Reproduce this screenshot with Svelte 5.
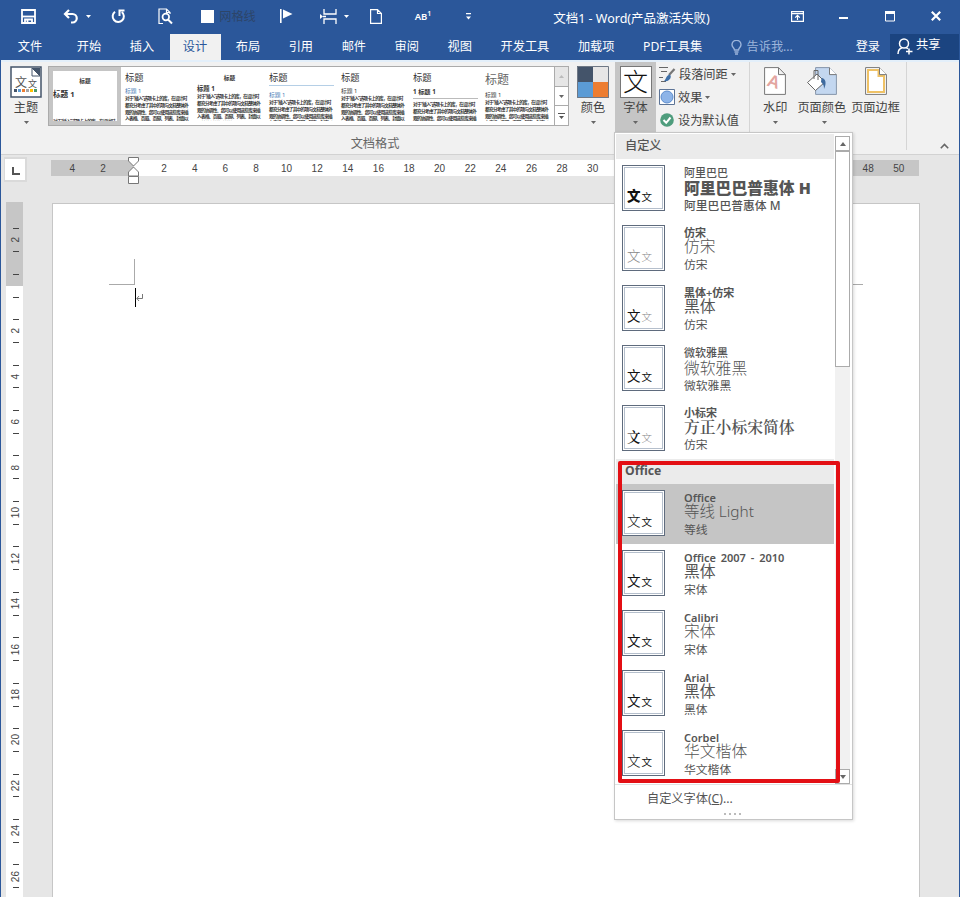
<script>
  const tabs = ['开始', '插入', '设计', '布局', '引用', '邮件', '审阅', '视图', '开发工具', '加载项', 'PDF工具集'];
  let activeTab = $state('设计');

  const sample =
    '对于“插入”选项卡上的库，在设计时都充分考虑了其中的项与文档整体外观的协调性。您可以使用这些库来插入表格、页眉、页脚、列表、封面以及其他文档构建基块。';

  const styles = [
    { kind: 'selected', heading: '标题 1' },
    { kind: 'blue', heading: '标题 1' },
    { kind: 'center', heading: '标题 1' },
    { kind: 'blue lined', heading: '标题 1' },
    { kind: 'plain', heading: '标题 1' },
    { kind: 'numbered', heading: '1 标题 1' },
    { kind: 'large', heading: '标题 1' }
  ];

  const customFonts = [
    { name: '阿里巴巴', head: '阿里巴巴普惠体 H', body: '阿里巴巴普惠体 M', kind: 'heavy low' },
    { name: '仿宋', head: '仿宋', body: '仿宋', kind: 'song faint' },
    { name: '黑体+仿宋', head: '黑体', body: '仿宋', kind: 'mixed' },
    { name: '微软雅黑', head: '微软雅黑', body: '微软雅黑', kind: 'low wide' },
    { name: '小标宋', head: '方正小标宋简体', body: '仿宋', kind: 'title-song' }
  ];

  const officeFonts = [
    { name: 'Office', head: '等线 Light', body: '等线', kind: 'thin' },
    { name: 'Office 2007 - 2010', head: '黑体', body: '宋体', kind: '' },
    { name: 'Calibri', head: '宋体', body: '宋体', kind: 'wide' },
    { name: 'Arial', head: '黑体', body: '黑体', kind: '' },
    { name: 'Corbel', head: '华文楷体', body: '华文楷体', kind: 'song' }
  ];
  let selectedFont = $state('Office');

  const hRuler = [4, 2, ''];
  for (let n = 2; n <= 50; n += 2) hRuler.push(n);

  const vRuler = [2, ''];
  for (let n = 2; n <= 26; n += 2) vRuler.push(n);
</script>

{#snippet caret()}
  <svg class="caret" width="5" height="3" viewBox="0 0 5 3"><path d="M0 0h5L2.5 3z" fill="currentColor" /></svg>
{/snippet}

{#snippet fontRow(font)}
  <button
    class="font-row {font.kind}"
    class:current={selectedFont === font.name}
    onclick={() => (selectedFont = font.name)}
  >
    <span class="thumb"><span class="thumb-in"><b>文</b><i>文</i></span></span>
    <span class="font-text">
      <span class="font-name">{font.name}</span>
      <span class="font-head">{font.head}</span>
      <span class="font-body">{font.body}</span>
    </span>
  </button>
{/snippet}

<div class="app">
  <header class="titlebar">
    <div>
      <svg width="15" height="15" viewBox="0 0 15 15" fill="none" stroke="#fff" stroke-width="1.8">
        <path d="M1 1h13v13H1z" /><path d="M1 7.500h13" /><path d="M4 14v-3.500h7V14" /><path d="M6.500 11v3" />
      </svg>
    </div>
    <div class="with-caret">
      <svg width="16" height="15" viewBox="0 0 16 15" fill="none" stroke="#fff" stroke-width="2.2">
        <path d="M6 1L2 5l4 4" /><path d="M2 5h7.500a4.200 4.200 0 0 1 0 8.500H8" />
      </svg>
      {@render caret()}
    </div>
    <div>
      <svg width="15" height="15" viewBox="0 0 15 15" fill="none" stroke="#fff" stroke-width="2">
        <path d="M4 2.800A5.600 5.600 0 1 0 10.800 3" /><path d="M13.500 1.500H8.500v5.500" />
      </svg>
    </div>
    <div>
      <svg width="15" height="17" viewBox="0 0 15 17" fill="none" stroke="#fff" stroke-width="1.2">
        <path d="M5 15.500H1V1h7.500L12 4.500V6M8.500 1v3.500H12" /><circle cx="7.800" cy="9" r="3.300" stroke-width="1.700" /><path d="M10 11.500l4 4" stroke-width="2" />
      </svg>
    </div>
    <div class="gridlines"><span class="box"></span><span>网格线</span></div>
    <div>
      <svg width="13" height="14" viewBox="0 0 13 14" fill="#fff"><path d="M0 0h1.600v14H0zM3 .5l9.500 4.500L3 9.500z" /></svg>
    </div>
    <div class="with-caret">
      <svg width="17" height="15" viewBox="0 0 17 15" fill="none" stroke="#fff" stroke-width="1.300">
        <path d="M4 0v5h12V0M4 15v-5h12v5M3 7.500h3" /><path d="M0 5l3 2.500L0 10z" fill="#fff" stroke="none" />
      </svg>
      {@render caret()}
    </div>
    <div>
      <svg width="12" height="15" viewBox="0 0 12 15" fill="none" stroke="#fff" stroke-width="1.200"><path d="M.6.6h6.900L11.400 4.500v9.900H.6zM7.500.6v3.900h3.900" /></svg>
    </div>
    <div class="ab">AB<sup>1</sup></div>
    <div>
      <svg width="5" height="7" viewBox="0 0 5 7" fill="#fff"><path d="M0 0h5v1.200H0zM0 3.500h5L2.500 6.500z" /></svg>
    </div>
    <div class="title">文档1 - Word(产品激活失败)</div>
    <div>
      <svg width="13" height="11" viewBox="0 0 13 11" fill="none" stroke="#fff" stroke-width="1.200">
        <path d="M.6.6h11.800v9.800H.6zM.6 2.600h11.800M6.500 9V4.500M4.200 6.600l2.300-2.300 2.300 2.300" />
      </svg>
    </div>
    <div><svg width="9" height="5" viewBox="0 0 9 5"><path d="M0 3h9v2H0z" fill="#fff" /></svg></div>
    <div>
      <svg width="10" height="11" viewBox="0 0 10 11"><path d="M.5.5h9v9.500h-9z" fill="none" stroke="#fff" /><path d="M0 0h10v3H0z" fill="#fff" /></svg>
    </div>
    <div>
      <svg width="10" height="10" viewBox="0 0 10 10"><path d="M.8.8l8.400 8.400M9.200.8L.8 9.200" stroke="#fff" stroke-width="2.200" /></svg>
    </div>
  </header>

  <nav class="tabs">
    <button class="tab file">文件</button>
    {#each tabs as tab}
      <button class="tab" class:active={tab === activeTab} onclick={() => (activeTab = tab)}>{tab}</button>
    {/each}
    <div class="tell">
      <svg width="11" height="15" viewBox="0 0 11 15" fill="none" stroke="#9db5db" stroke-width="1.400">
        <path d="M3.500 10C3.500 8 1 7.500 1 4.800a4.300 4.300 0 0 1 9 0C10 7.500 7.500 8 7.500 10zM3.500 12h4M4 14h3" />
      </svg>
      <span>告诉我...</span>
    </div>
    <button class="login">登录</button>
    <button class="share">
      <svg width="16" height="17" viewBox="0 0 16 17" fill="none" stroke="#fff" stroke-width="1.500">
        <circle cx="7" cy="5.500" r="4.500" /><path d="M1 16c0-3.500 1.500-5.500 4-6.300M9 9.700l2 1M12 10.500v6M9 13.500h6.500" />
      </svg>
      <span>共享</span>
    </button>
  </nav>

  <section class="ribbon">
    <button class="big theme">
      <svg width="32" height="32" viewBox="0 0 32 32">
        <path d="M1 1h30v30H1z" fill="#fff" stroke="#44546a" stroke-width="1.500" />
        <path d="M22 2v8h8z" fill="#fff" stroke="#44546a" /><path d="M22 2h8v8z" fill="#44546a" />
        <text x="5" y="21" font-size="12" fill="#555">文</text><text x="18" y="21" font-size="9" fill="#555">文</text>
        <path d="M4 23h3v3H4z" fill="#44546a" /><path d="M8 23h3v3H8z" fill="#5b9bd5" /><path d="M12 23h3v3h-3z" fill="#ed7d31" />
        <path d="M16 23h3v3h-3z" fill="#a5a5a5" /><path d="M20 23h3v3h-3z" fill="#ffc000" /><path d="M24 23h3v3h-3z" fill="#4a9a6b" />
      </svg>
      <span>主题</span>
      {@render caret()}
    </button>

    <div class="formats">
      <div class="gallery">
        {#each styles as style}
          <div class="style {style.kind}">
            <div class="style-title">标题</div>
            <div class="style-heading">{style.heading}</div>
            <div class="style-body">{sample}</div>
          </div>
        {/each}
        <div class="spinner">
          <span class="off"><svg class="caret" width="5" height="3"><path d="M0 3h5L2.500 0z" fill="currentColor" /></svg></span>
          <span>{@render caret()}</span>
          <span><svg width="7" height="6"><path d="M0 0h7v1H0zM1 3h5L3.500 6z" fill="#555" /></svg></span>
        </div>
      </div>
      <div class="group-label">文档格式</div>
    </div>

    <button class="big colors">
      <svg width="32" height="32" viewBox="0 0 32 32">
        <path d="M0 0h16v16H0z" fill="#44546a" /><path d="M16 0h16v16H16z" fill="#e7e6e6" />
        <path d="M0 16h16v16H0z" fill="#5b9bd5" /><path d="M16 16h16v16H16z" fill="#ed7d31" />
        <path d="M.5.5h31v31H.5z" fill="none" stroke="#6f7885" />
      </svg>
      <span>颜色</span>
      {@render caret()}
    </button>

    <button class="big fonts">
      <span class="font-icon">文</span>
      <span>字体</span>
      {@render caret()}
    </button>

    <div class="stack">
      <button>
        <svg width="17" height="17" viewBox="0 0 17 17" fill="none">
          <path d="M0 1.500h9M2 5.500h6M0 11.500h4M2 15.500h5" stroke="#666" /><path d="M15.500 3L10 9" stroke="#777" stroke-width="2.200" />
          <path d="M10.500 8.500c2 1 1.500 4-.5 5.500-1.500 1.200-3.500 1.500-5 1 2-1 1.500-5 5.500-6.500z" fill="#3e6fa8" />
        </svg>
        <span>段落间距</span>{@render caret()}
      </button>
      <button>
        <svg width="16" height="16" viewBox="0 0 16 16">
          <path d="M.5.5h15v15H.5z" fill="#fff" stroke="#5d7496" /><circle cx="8" cy="8" r="6" fill="#8db4e8" stroke="#5c8ccd" />
        </svg>
        <span>效果</span>{@render caret()}
      </button>
      <button>
        <svg width="16" height="16" viewBox="0 0 16 16">
          <circle cx="8" cy="8" r="6.800" fill="#4f9d7d" /><path d="M4.500 8l2.700 2.800 4.300-5.300" fill="none" stroke="#fff" stroke-width="2" />
        </svg>
        <span>设为默认值</span>
      </button>
    </div>

    <div class="page-group">
      <button class="big">
        <svg width="22" height="30" viewBox="0 0 22 30">
          <path d="M.6 1.600h13.900l6.900 7v19.800H.6zM14.500 1.600v7h6.900" fill="#fff" stroke="#777" />
          <text class="mark" x="4" y="22" transform="rotate(18 11 16)">A</text>
        </svg>
        <span>水印</span>
        {@render caret()}
      </button>
      <button class="big page-color">
        <svg width="32" height="30" viewBox="0 0 32 30">
          <path d="M9.600 1.600h13.900l6.900 7v19.800H9.600z" fill="#c3d7f0" stroke="#8796aa" /><path d="M23.500 1.600v7h6.900" fill="#fff" stroke="#777" />
          <path d="M1.500 16.500L11 8l8 8-9.500 8.500z" fill="#fff" stroke="#666" /><path d="M8 13V4.500h4V14" fill="none" stroke="#666" />
          <path d="M15.500 12c4 0 5.500 5 2.500 11 0-4-1-5-3-7z" fill="#3e6a9e" />
        </svg>
        <span>页面颜色</span>
        {@render caret()}
      </button>
      <button class="big">
        <svg width="22" height="30" viewBox="0 0 22 30">
          <path d="M.6 1.600h13.900l6.900 7v19.800H.6z" fill="#fff" stroke="#777" />
          <path d="M3 4h10.500v6H19v16H3z" fill="none" stroke="#efc266" stroke-width="2" /><path d="M14.500 1.600v7h6.900" fill="#fff" stroke="#777" />
        </svg>
        <span>页面边框</span>
      </button>
    </div>

    <svg class="collapse" width="9" height="6" viewBox="0 0 9 6"><path d="M.8 5.200L4.500 1.500l3.700 3.700" fill="none" stroke="#666" stroke-width="1.600" /></svg>
  </section>

  <main class="workspace">
    <div class="ruler-row">
      <div class="tab-stop"><svg width="8" height="8"><path d="M1 0v7h7" fill="none" stroke="#555" stroke-width="2" /></svg></div>
      <div class="h-ruler">
        {#each hRuler as n}<span>{n}</span>{/each}
        <svg class="indent" width="12" height="29" viewBox="0 0 12 29" fill="#fff" stroke="#777">
          <path d="M.5 1.500h10V5L5.500 10 .5 5zM5.500 11l5 5v4H.5v-4zM.5 20.500h10v7H.5z" />
        </svg>
      </div>
    </div>
    <div class="doc-row">
      <div class="v-ruler">
        {#each vRuler as n}
          <div class="v-cell"><hr /><span>{n}</span><hr /></div>
        {/each}
      </div>
      <div class="page">
        <div class="crops"><span class="crop-left"></span><span class="crop-right"></span></div>
        <div class="line">
          <span class="cursor"></span>
          <svg width="7" height="8" viewBox="0 0 7 8" fill="none" stroke="#777"><path d="M6.500 0v4.500H1M3 2L.8 4.500 3 7" /></svg>
        </div>
      </div>
    </div>
  </main>

  <div class="menu">
    <div class="menu-top">
      <div class="menu-list">
        <div class="menu-header">自定义</div>
        {#each customFonts as font}{@render fontRow(font)}{/each}
        <div class="menu-header office">Office</div>
        {#each officeFonts as font}{@render fontRow(font)}{/each}
      </div>
      <div class="scrollbar">
        <span class="arrow"><svg width="6" height="4"><path d="M0 4h6L3 0z" fill="#666" /></svg></span>
        <span class="track-thumb"></span>
        <span class="arrow down"><svg width="6" height="4"><path d="M0 0h6L3 4z" fill="#666" /></svg></span>
      </div>
    </div>
    <div class="menu-footer">自定义字体(<u>C</u>)...</div>
    <div class="grip"><i></i><i></i><i></i><i></i></div>
    <div class="highlight"></div>
  </div>
</div>

<style>
  :global(body) {
    margin: 0;
  }

  .app {
    position: relative;
    box-sizing: border-box;
    width: 960px;
    height: 897px;
    display: flex;
    flex-direction: column;
    overflow: hidden;
    border: solid #2b579a;
    border-width: 0 1px;
    background: #e6e6e6;
    font-family: 'Noto Sans', 'Noto Sans CJK SC', sans-serif;
    font-size: 12.2px;
    color: #444;
  }

  .app * {
    box-sizing: border-box;
  }

  svg {
    display: block;
    flex: none;
  }

  button {
    padding: 0;
    border: 0;
    background: none;
    color: inherit;
    font: inherit;
    white-space: nowrap;
  }

  /* title bar */
  .titlebar {
    display: grid;
    grid-template-columns: 54px 46px 34px 60px 67px 48px 50px 32px 62px 28px 292px 46px 46px 47px 46px;
    flex: none;
    height: 34px;
    background: #2b579a;
    color: #fff;
  }

  .titlebar > div {
    display: flex;
    align-items: center;
    justify-content: center;
    padding-bottom: 2px;
    white-space: nowrap;
  }

  .titlebar .with-caret {
    gap: 7px;
    padding-right: 2px;
  }

  .gridlines {
    gap: 5px;
    color: #2d4569;
  }

  .box {
    width: 13px;
    height: 13px;
    background: #fff;
  }

  .titlebar .ab {
    font-size: 9.5px;
    font-weight: 600;
  }

  sup {
    font-size: 7px;
    line-height: 1;
    margin-bottom: 6px;
  }

  .titlebar .title {
    padding: 1px 0 0 7px;
    font-size: 12.5px;
  }

  /* tabs */
  .tabs {
    display: flex;
    flex: none;
    height: 26px;
    background: #2b579a;
    color: #fff;
  }

  .tab {
    flex: none;
    padding: 0 14.3px 3px;
  }

  .file {
    width: 58px;
    margin-right: 3.5px;
  }

  .active {
    margin-left: 1.5px;
    padding-left: 12.8px;
    background: #f1f1f1;
    color: #2b579a;
  }

  .tell {
    display: flex;
    align-items: center;
    gap: 5px;
    width: 126px;
    padding-left: 14px;
    color: #9db5db;
  }

  .tell span {
    padding-bottom: 2px;
  }

  .login {
    margin-left: auto;
    padding: 0 10px 3px 0;
  }

  .share {
    display: flex;
    gap: 3px;
    width: 69px;
    padding: 4px 0 0 7px;
    background: #1b4480;
  }

  .share span {
    line-height: 14px;
  }

  /* ribbon */
  .ribbon {
    display: flex;
    align-items: flex-start;
    flex: none;
    height: 95px;
    border-top: 2px solid #e3effa;
    border-bottom: 1px solid #d2d2d2;
    background: #f1f1f1;
  }

  .big {
    display: flex;
    flex-direction: column;
    align-items: center;
    flex: none;
    height: 70px;
    padding-top: 4px;
    line-height: 19px;
  }

  .big > span:not(.font-icon) {
    height: 22px;
    margin-bottom: 1px;
  }

  .caret {
    color: #666;
  }

  .titlebar .caret {
    color: #fff;
  }

  .theme {
    width: 32px;
    margin: 0 6px 0 9px;
  }

  .formats {
    width: 521px;
    padding-top: 4px;
  }

  .gallery {
    display: flex;
    height: 60px;
    border: 1px solid #ababab;
    background: #fff;
  }

  .style {
    width: 72px;
    height: 58px;
    flex: none;
    padding: 4px 3px 0 4px;
    overflow: hidden;
    border-bottom: 4px solid #fff;
    color: #333;
  }

  .style-title {
    height: 16px;
    font-size: 9.3px;
    line-height: 14px;
  }

  .style-heading {
    height: 8px;
    font-size: 5.8px;
    line-height: 8px;
    white-space: nowrap;
  }

  .style-body {
    font-size: 4.7px;
    line-height: 6.8px;
    font-weight: 700;
    letter-spacing: -0.75px;
    word-break: break-all;
  }

  .blue .style-heading {
    color: #4579b5;
  }

  .selected {
    border: 4px solid #c5c5c5;
    padding: 3px 0 0;
  }

  .selected .style-title,
  .center .style-title {
    font-size: 5.7px;
    font-weight: bold;
    text-align: center;
  }

  .selected .style-heading {
    height: 28px;
    font-size: 7.6px;
    font-weight: bold;
  }

  .center .style-heading {
    margin-top: -2px;
    font-size: 6.3px;
    font-weight: bold;
  }

  .lined .style-title {
    height: 15px;
    margin-bottom: 5px;
    border-bottom: 1px solid #b5cfe6;
  }

  .numbered .style-heading {
    height: 12px;
    margin-bottom: 2px;
    padding-top: 1px;
    border-bottom: 1px solid #bbb;
    font-size: 6.2px;
    font-weight: bold;
  }

  .large .style-title {
    height: 20px;
    padding-top: 2px;
    font-size: 12px;
    color: #666;
  }

  .spinner {
    display: flex;
    flex-direction: column;
    flex: none;
    width: 14px;
    margin-left: auto;
    border-left: 1px solid #ababab;
  }

  .spinner span {
    display: flex;
    align-items: center;
    justify-content: center;
    flex: 1;
    border-top: 1px solid #ababab;
  }

  .spinner .off {
    border-top: 0;
    background: #e6e6e6;
  }

  .off .caret {
    color: #bbb;
  }

  .group-label {
    padding: 9px 0 0 133px;
    text-align: center;
    line-height: 18px;
    color: #666;
  }

  .colors {
    width: 32px;
    margin: 0 6px 0 8px;
  }

  .fonts {
    width: 41px;
    background: #c5c5c5;
  }

  .font-icon {
    width: 32px;
    height: 32px;
    border: 1px solid #777;
    background: #fff;
    font-size: 25px;
    font-weight: 300;
    line-height: 28px;
    color: #111;
  }

  .stack {
    display: flex;
    flex-direction: column;
    width: 94px;
    height: 70px;
    padding: 1px 0 0 3px;
    border-right: 1px solid #d5d5d5;
  }

  .stack button {
    display: flex;
    align-items: center;
    gap: 3px;
    height: 22.7px;
  }

  .page-group {
    display: flex;
    gap: 5px;
    height: 88px;
    padding: 0 6px 0 13px;
    border-right: 1px solid #d5d5d5;
  }

  .page-group .big > svg:first-child {
    margin-bottom: 2px;
  }

  .page-group .big:first-child {
    margin-right: 5px;
  }

  .mark {
    font-size: 17px;
    font-weight: 600;
    fill: #e3a5a0;
  }

  .page-color .caret {
    margin-left: 6px;
  }

  .collapse {
    margin: 81px 0 0 33px;
  }

  /* rulers and page */
  .workspace {
    display: flex;
    flex-direction: column;
    flex: 1;
    min-height: 0;
  }

  .ruler-row {
    display: flex;
    flex: none;
    height: 47px;
  }

  .tab-stop {
    width: 23px;
    height: 25px;
    margin: 2px 25px 0 3px;
    padding: 8px 0 0 7px;
    border: 2px solid #dadada;
    border-left-width: 1px;
    background: #fff;
    flex: none;
  }

  .h-ruler {
    position: relative;
    display: flex;
    width: 868px;
    height: 16px;
    margin-top: 5px;
    margin-left: -1px;
    padding-left: 6px;
    background: linear-gradient(90deg, #c6c6c6 83px, #fff 83px 786px, #c6c6c6 786px);
    font: 10px/17px 'Liberation Sans', sans-serif;
  }

  .h-ruler span {
    flex: none;
    width: 30.62px;
    text-align: center;
  }

  .indent {
    position: absolute;
    left: 77px;
    top: -4px;
  }

  .doc-row {
    display: flex;
    flex: 1;
    min-height: 0;
  }

  .v-ruler {
    flex: none;
    width: 17px;
    margin: 0 29px 0 5px;
    padding-top: 15.5px;
    overflow: hidden;
    background: linear-gradient(#c6c6c6 84px, #fff 84px);
    font: 10px/12px 'Liberation Sans', sans-serif;
  }

  .v-cell {
    display: flex;
    flex-direction: column;
    align-items: center;
    justify-content: space-between;
    height: 45.45px;
    padding: 10.8px 0;
    padding-left: 2px;
  }

  .v-cell hr {
    width: 6px;
    height: 1px;
    margin: 0;
    border: 0;
    background: #444;
  }

  .v-cell span {
    writing-mode: vertical-rl;
    transform: rotate(180deg);
  }

  .page {
    width: 868px;
    margin-top: 1px;
    border: 1px solid #c6c6c6;
    border-bottom: 0;
    background: #fff;
  }

  .crops {
    display: flex;
    justify-content: space-between;
    padding: 55px 56px 0;
  }

  .crops span {
    width: 26px;
    height: 26px;
    border-bottom: 1px solid #aaa;
  }

  .crop-left {
    border-right: 1px solid #aaa;
  }

  .crop-right {
    border-left: 1px solid #aaa;
  }

  .line {
    display: flex;
    align-items: center;
    padding: 3px 0 0 82px;
  }

  .cursor {
    width: 1px;
    height: 19px;
    background: #000;
  }

  /* fonts menu */
  .menu {
    position: absolute;
    left: 613px;
    top: 132px;
    width: 239px;
    height: 688px;
    display: flex;
    flex-direction: column;
    border: 1px solid #c6c6c6;
    background: #fff;
    box-shadow: 1px 1px 3px rgba(0, 0, 0, 0.15);
    color: #555;
  }

  .menu-top {
    display: flex;
    height: 652px;
    padding-left: 1px;
    border-bottom: 1px solid #e1e1e1;
    flex: none;
  }

  .menu-list {
    width: 218px;
    padding-top: 1px;
  }

  .menu-header {
    height: 25px;
    padding-left: 9px;
    background: #ebebeb;
    font-weight: 500;
    line-height: 24px;
  }

  .office {
    font-weight: bold;
    line-height: 23px;
  }

  .font-row {
    display: flex;
    width: 100%;
    height: 60px;
    padding: 6px 0 0 6px;
    text-align: left;
  }

  .current {
    background: #c5c5c5;
  }

  .thumb {
    width: 43px;
    height: 46px;
    flex: none;
    padding: 1px;
    border: 1px solid #5f6b7d;
    background: #fff;
  }

  .thumb-in {
    display: flex;
    align-items: baseline;
    gap: 1px;
    height: 100%;
    padding: 18px 0 0 2px;
    border: 1px solid #b5bfcc;
    color: #111;
    line-height: 20px;
  }

  .thumb b {
    font-size: 13.5px;
    font-weight: 400;
  }

  .thumb i {
    font-size: 10.5px;
    font-style: normal;
  }

  .font-text {
    display: flex;
    flex-direction: column;
    padding: 2px 0 0 19px;
  }

  .font-name {
    height: 13px;
    font-size: 11px;
    font-weight: 600;
    line-height: 12px;
    word-spacing: 2px;
  }

  .font-head {
    height: 17px;
    font-size: 15.8px;
    line-height: 13px;
  }

  .font-body {
    font-size: 11.8px;
    line-height: 15px;
  }

  .low .font-head {
    line-height: 17px;
  }

  .low .font-body {
    line-height: 17px;
  }

  .heavy .font-name,
  .low .font-name {
    font-weight: 500;
  }

  .heavy .font-head,
  .heavy b {
    font-weight: 900;
  }

  .heavy .font-body {
    font-weight: 500;
  }

  .wide .font-head {
    font-weight: 300;
  }

  .faint b,
  .faint i,
  .mixed i,
  .title-song i {
    color: #888;
    font-weight: 300;
  }

  .thin b,
  .thin .font-head {
    font-weight: 300;
  }

  .thin .font-head {
    font-size: 15.4px;
  }

  .title-song .font-head,
  .title-song b {
    font-weight: 600;
    font-family: 'Noto Serif CJK SC', 'Noto Sans CJK SC', serif;
  }

  .song b,
  .song .font-head {
    font-weight: 300;
  }

  .scrollbar {
    display: flex;
    flex-direction: column;
    width: 15px;
    margin: 3px 0 0 1px;
    background: #f1f1f1;
  }

  .arrow {
    display: flex;
    align-items: center;
    justify-content: center;
    width: 15px;
    height: 15px;
    border: 1px solid #ababab;
    background: #fff;
  }

  .track-thumb {
    width: 15px;
    height: 216px;
    border: 1px solid #ababab;
    background: #fff;
  }

  .down {
    margin-top: auto;
  }

  .menu-footer {
    padding: 5px 0 0 32px;
    line-height: 18px;
  }

  .grip {
    display: flex;
    justify-content: center;
    gap: 3px;
    padding: 5px 3px 0 0;
  }

  .grip i {
    width: 2px;
    height: 2px;
    background: #bbb;
  }

  .highlight {
    position: absolute;
    left: 3px;
    top: 328px;
    width: 222px;
    height: 322px;
    border: 4px solid #e30f14;
    border-radius: 2px;
    pointer-events: none;
  }
</style>
